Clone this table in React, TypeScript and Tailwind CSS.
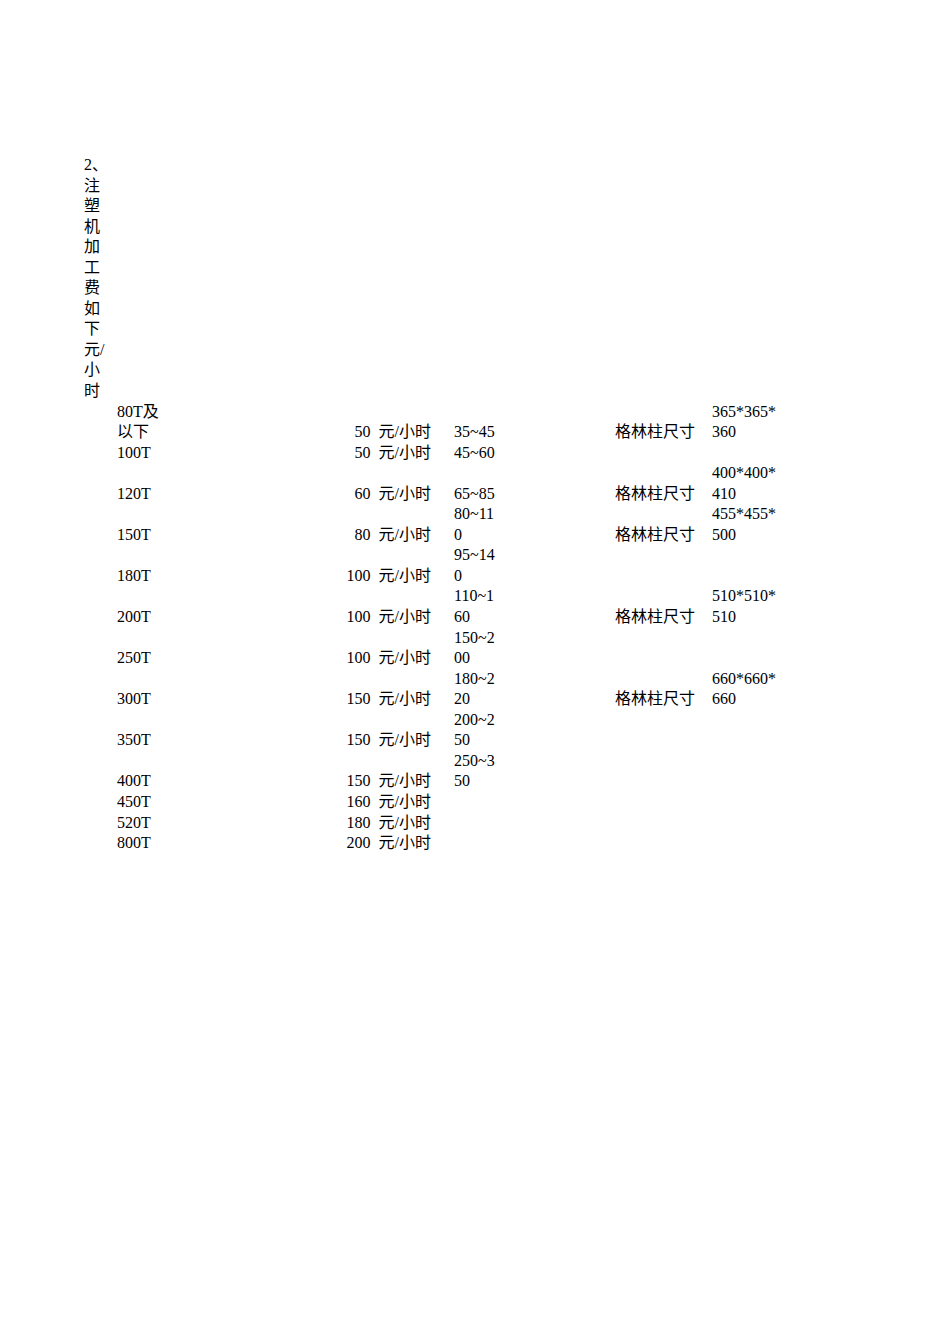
type Row = {
  size: string[];
  price?: string;
  range?: string[];
  label?: string;
  dims?: string[];
};

const title = ["2、", "注", "塑", "机", "加", "工", "费", "如", "下", "元/", "小", "时"];

const rows: Row[] = [
  { size: ["80T及", "以下"], price: "50 元/小时", range: ["35~45"], label: "格林柱尺寸", dims: ["365*365*", "360"] },
  { size: ["100T"], price: "50 元/小时", range: ["45~60"] },
  { size: ["120T"], price: "60 元/小时", range: ["65~85"], label: "格林柱尺寸", dims: ["400*400*", "410"] },
  { size: ["150T"], price: "80 元/小时", range: ["80~11", "0"], label: "格林柱尺寸", dims: ["455*455*", "500"] },
  { size: ["180T"], price: "100 元/小时", range: ["95~14", "0"] },
  { size: ["200T"], price: "100 元/小时", range: ["110~1", "60"], label: "格林柱尺寸", dims: ["510*510*", "510"] },
  { size: ["250T"], price: "100 元/小时", range: ["150~2", "00"] },
  { size: ["300T"], price: "150 元/小时", range: ["180~2", "20"], label: "格林柱尺寸", dims: ["660*660*", "660"] },
  { size: ["350T"], price: "150 元/小时", range: ["200~2", "50"] },
  { size: ["400T"], price: "150 元/小时", range: ["250~3", "50"] },
  { size: ["450T"], price: "160 元/小时" },
  { size: ["520T"], price: "180 元/小时" },
  { size: ["800T"], price: "200 元/小时" },
];

/** One cell, one line per entry (the sheet wraps narrow columns). */
function Lines({ lines }: { lines?: string[] }) {
  if (!lines) return null;
  return (
    <>
      {lines.map((line, i) => (
        <div key={i}>{line}</div>
      ))}
    </>
  );
}

export default function App() {
  return (
    <div
      className="min-h-screen bg-white pt-[155px] pl-[84px] text-[16px] leading-[20.55px] text-black"
      style={{ fontFamily: '"Liberation Serif", "Noto Sans CJK SC", serif' }}
    >
      {/* title cell, wrapped char by char in a narrow column */}
      <div className="flex items-end">
        <div className="w-[33px] whitespace-nowrap">
          <Lines lines={title} />
        </div>
      </div>

      {rows.map((row, i) => (
        <div key={i} className="flex items-end whitespace-nowrap">
          <div className="w-[33px]" />
          <div className="w-[223px]">
            <Lines lines={row.size} />
          </div>
          <div className="w-[91px] text-right [word-spacing:4px]">{row.price}</div>
          <div className="w-[184px] pl-[23px]">
            <Lines lines={row.range} />
          </div>
          <div className="w-[97px]">{row.label}</div>
          <div className="w-[88px]">
            <Lines lines={row.dims} />
          </div>
        </div>
      ))}
    </div>
  );
}
